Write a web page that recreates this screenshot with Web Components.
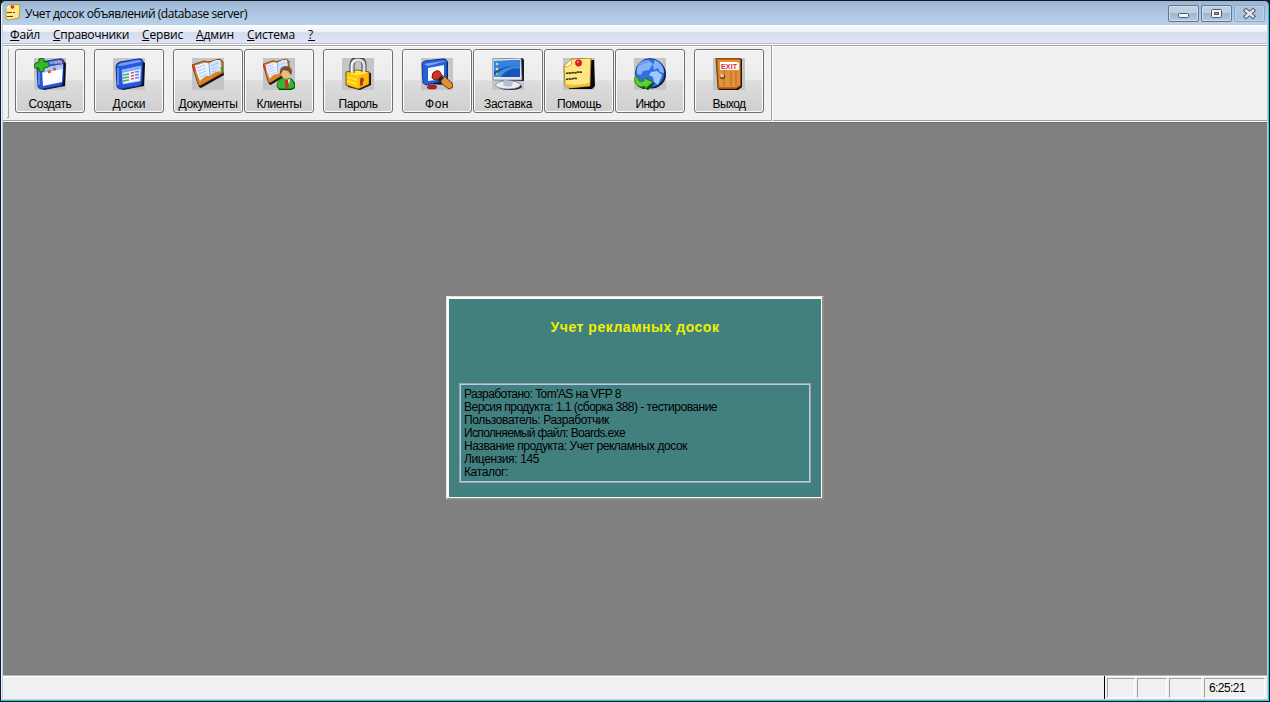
<!DOCTYPE html>
<html lang="ru"><head><meta charset="utf-8"><title>Учет досок объявлений</title>
<style>html,body{margin:0;width:1270px;height:702px;overflow:hidden;background:#101820}</style></head><body>
<boards-app></boards-app>
<script>
class Base extends HTMLElement{
  render(html){if(!this.shadowRoot)this.attachShadow({mode:'open'}).innerHTML=html}
}
// Text run whose tracking is adjusted so that it fills a given width
class FitText extends Base{
  connectedCallback(){
    this.render('<style>:host{display:inline-block;white-space:pre;line-height:inherit}span{display:inline-block}</style><span><slot></slot></span>');
    const s=this.shadowRoot.querySelector('span'),w=+this.getAttribute('w');
    const n=this.textContent.length;
    if(w&&n){s.style.letterSpacing=((w-s.getBoundingClientRect().width)/n)+'px'}
  }
}
customElements.define('fit-text',FitText);

const book='<path d="M2 9L14 5l3 2L31 3v10l1 4L9 30l-2-1z" fill="#111"/><path d="M0 7L12 3l4 1L28 1l3 3v11L8 28 6 26z" fill="#d8842a" stroke="#5a2c08" stroke-width=".8"/><path d="M2 8l9-3q4-1 6 1 4-4 11-4l2 11q-8 0-12 5-5-1-10 5z" fill="#e8f1ff"/><path d="M17 6l1 12q4-5 12-5L28 2q-7 0-11 4z" fill="#cfe4ff"/><path d="M17 6l1 12" stroke="#8ba8df"/><path d="M5 10l8-3M6 13l8-3M7 16l7-3M8 19l7-3M19 8l7-3M20 11l6-2M20 14l6-2" stroke="#a2b9ee" stroke-dasharray="2 .7"/><path d="M2 8l1 6" stroke="#f42e2e" stroke-width="2"/><path d="M29.500 9l.5 4" stroke="#22aa36" stroke-width="2"/>';
const frame='<path d="M5 6L27 2l5 3-1 23L10 32l-5-3z" fill="#080b19"/><path d="M3 9q0-4 4-5L25 1q4-1 5 2l-1 21q0 3-3 4L9 31q-5 0-5-3z" fill="#2457d9" stroke="#102982" stroke-width=".9"/><path d="M5 8Q5 6 9 5L25 2q3 0 3 2L8 8z" fill="#719ff7"/><path d="M5 10v17" stroke="#5b87ee" stroke-width="2"/>';
const ICONS={
create:frame+'<path d="M8 11l21-4-1 17-19 4z" fill="#fff"/><path d="M8 10l21-4v5L8 15z" fill="#a9c9ff"/><path d="M14 14l3-.6M19 11h3M26 6h2" stroke="#ed5a2d" stroke-width="3"/><path d="M21 5l7-1" stroke="#f59b8c" stroke-width="2" stroke-dasharray="2 1"/><path d="M5 1q4-2 5 0v3q4-1 5 1 1 3-1 4l-4 1v3q-2 2-5 0v-3q-4 1-5-1 0-4 2-4l3-1z" fill="#35b928" stroke="#125e12"/>',
boards:frame+'<path d="M9 12l19-4-1 15-17 3z" fill="#edf3ff" stroke="#a9bff0" stroke-width=".7"/><path d="M9 12l19-4v3L9 15z" fill="#82acff"/><path d="M10 17l6-1M10 20l6-1M10 23l6-1" stroke="#3fac68" stroke-width="1.5"/><path d="M18 15l3-.5M18 18l3-.5M18 21l3-.5" stroke="#ea524f" stroke-width="1.7"/><path d="M22 14l4-.6M22 17l4-.6M22 20l4-.6" stroke="#6580ec" stroke-width="1.5"/>',
docs:book,
clients:'<g transform="scale(.84 .9)">'+book+'</g><path d="M16 32q-3-9 5-12h6q6 3 5 10l-4 2z" fill="#08230a"/><path d="M14 29q0-8 6-9h6q5 2 6 9l-4 2H17z" fill="#30b72d" stroke="#0a5a10" stroke-width=".8"/><path d="M20 20l3 4 4-4-1 7-3-3z" fill="#fff"/><path d="M22 22h3l1 6-2 3-2-3z" fill="#d2292b"/><ellipse cx="23" cy="15" rx="5" ry="6" fill="#efb778"/><path d="M17 16q-1-7 5-8 7 0 7 6l-1 3-3-4-5-1-2 4z" fill="#745034"/>',
password:'<path d="M6 14l9-2 14 3v12L18 32 6 29z" fill="#17120b"/><path d="M4 14l11-2 12 2v12l-11 5L4 27z" fill="#ffc80d" stroke="#795000"/><path d="M5 14.500l10-2 11 2-10 3z" fill="#ffe849"/><path d="M16 18l10.500-3v11L16 30.500z" fill="#fdb80c"/><path d="M5 19l10 3M5 23l10 3" stroke="#ffe93c" stroke-width="1.500"/><path d="M10 15V8q0-7 6-7t6 6v7" stroke="#4b4b4b" stroke-width="5"/><path d="M10 15V8q0-6 6-6t6 5v7" stroke="#dedede" stroke-width="3"/><path d="M9.500 14V8q0-5 4-6" stroke="#fff"/><path d="M18 22q0-2.500 2-2.500t2 2.500l-1 2v3l-3 1z" fill="#ad391d"/>',
background:'<path d="M4 5L24 1l3 3v23L5 26z" fill="#0b1533"/><path d="M1 6q0-2 3-3L21 1q4-1 5 2v19L5 27l-3-2z" fill="#2760d7" stroke="#133896"/><path d="M3 6L22 3h3L7 8z" fill="#7da8ff"/><path d="M7 10l16-3v14L7 23z" fill="#f2f6ff"/><ellipse cx="11" cy="29" rx="5" ry="2.5" fill="#ad211e"/><path d="M11 19q0-5 4-6 4-1 5 3l3 3-3 4-8-2z" fill="#cf3227" stroke="#7e1a15"/><path d="M19 21l4-3 8 7 1 4-4 2-7-5z" fill="#e19234" stroke="#6c3908"/><path d="M16 22l4-4 3 2-4 4z" fill="#26242c"/>',
screen:'<path d="M2 1L30 0l2 2v21L2 22z" fill="#111a27"/><path d="M1 1L29 0l1 22L1 22z" fill="#e5e6ec" stroke="#777f92" stroke-width=".7"/><path d="M2 3l26-1v17H2z" fill="#1656b9"/><path d="M2 3l26-1v9Q17 5 2 14z" fill="#3183dd"/><path d="M2 18q12-12 26-8-14 0-19 9H2z" fill="#62adf1" opacity=".65"/><circle cx="5" cy="6" r="1.3" fill="#b7dced"/><circle cx="5" cy="11" r="1.3" fill="#ffe45e"/><circle cx="5" cy="16" r="1.3" fill="#68d775"/><ellipse cx="18" cy="28.5" rx="12" ry="3.5" fill="#222"/><ellipse cx="16" cy="27" rx="12.5" ry="4" fill="#ececf3" stroke="#787c8e" stroke-width=".7"/><path d="M12 22l9 1-1 5q-6 2-9-1z" fill="#b8bed1"/>',
help:'<path d="M4 8L9 2h22l1 26-3 3H6z" fill="#080808"/><path d="M1 8L8 1l20-1-1 28-20 2-5-2z" fill="#ffe681" stroke="#927420" stroke-width=".8"/><path d="M1 8L8 1l1 5-5 3z" fill="#fff7c5" stroke="#a27b24" stroke-width=".6"/><path d="M2 26q12 2 25-1v3L7 30l-5-2z" fill="#f0bd36"/><path d="M3 15.500l3-.7 1 .5 3-.8 2 .4 3-.9 4 .2M3 21.500l3-.7 2 .4 3-.9 3 .2" stroke="#3a3418" stroke-width="1.600" stroke-dasharray="2.500 .4"/><circle cx="15.5" cy="5" r="3.4" fill="#d71c24"/><circle cx="14.8" cy="4" r="1.1" fill="#ff9486"/>',
info:'<circle cx="17.500" cy="16" r="14.500" fill="#101632"/><circle cx="16" cy="15" r="14.5" fill="#336ee2" stroke="#163380" stroke-width=".8"/><path d="M3 10Q6 3 14 2l5 4-4 6-6 1-2 4-4-1zM21 2q9 4 9 13l-4-1-2-4-4 2-1-5z" fill="#86b1f8"/><path d="M17 14l6-1 5 4-4 10-4-3-1-5-4-2z" fill="#a0cbff"/><path d="M5 7q5-4 9-3" stroke="#6d9bf1" stroke-width="3"/><path d="M2 19q-3 9 7 12h4v2l8-8-9-5v4q-6 1-8-3z" fill="#154a14"/><path d="M1 19q-2 9 7 10l3-1v3l8-7-9-4v3q-6 2-6-4z" fill="#59cf30" stroke="#1d7818" stroke-width=".7"/>',
exit:'<path d="M5 1h24v28l-4 3H6z" fill="#0c0603"/><path d="M3 0h24l1 2v26l-5 3H5z" fill="#bd6514" stroke="#582b09" stroke-width=".8"/><path d="M5 2h22v25l-4 2H6z" fill="#df913b"/><path d="M11 13v15M18 13v15M23 13v15" stroke="#bd6c21"/><path d="M7 4h17l2 1v7H7z" fill="#fff"/><text x="8" y="10.500" font-family="Liberation Sans" font-size="7" font-weight="700" textLength="16" fill="#e61d31">EXIT</text><circle cx="9.5" cy="18.500" r="2.8" fill="#824412"/><circle cx="9" cy="17.500" r="2" fill="#efc38b"/>'
};
class AppIcon extends Base{connectedCallback(){this.render(`<style>:host{display:block;width:32px;height:32px;background:#c5c4c6}svg{display:block}</style><svg width="32" height="32" viewBox="0 0 32 32" fill="none">${ICONS[this.getAttribute('name')]}</svg>`)}}
customElements.define('app-icon',AppIcon);

class ToolButton extends Base{connectedCallback(){this.render(`<style>
:host{display:flex;flex-direction:column;align-items:center;box-sizing:border-box;width:70px;height:64px;border:1px solid #707070;border-radius:3px;box-shadow:inset 0 0 0 1px #fbfbfb;background:linear-gradient(#f2f2f2,#ebebeb 48%,#dddddd 50%,#cfcfcf);padding-top:8px;font:12px/15px "Liberation Sans",sans-serif;color:#000}
app-icon{margin-bottom:7px}</style><app-icon name="${this.getAttribute('icon')}"></app-icon><fit-text w="${this.getAttribute('w')}">${this.getAttribute('label')}</fit-text>`)}}
customElements.define('tool-button',ToolButton);

class ToolBar extends Base{connectedCallback(){
 const g=[[['create','Создать',43]],[['boards','Доски',33]],[['docs','Документы',59],['clients','Клиенты',45]],[['password','Пароль',39]],[['background','Фон',24],['screen','Заставка',48],['help','Помощь',44],['info','Инфо',29]],[['exit','Выход',33]]];
 this.render(`<style>:host{display:flex;box-sizing:border-box;height:78px;background:#f0f0f0;border:solid #fff;border-width:1px 0;box-shadow:inset 0 1px #a0a0a0,inset 0 2px #fff,inset 0 -1px #a0a0a0}
 .band{display:flex;gap:9px;width:769px;box-sizing:border-box;padding:3px 0 0 4px;border-right:1px solid #a0a0a0;margin-top:1px}.grip{height:69px;border:solid #a0a0a0;border-width:0 1px 1px 0;margin-right:-3px;box-sizing:border-box;width:2px}
 .g{display:flex;gap:1px}.end{width:1px;background:#fff}</style><div class="band"><div class="grip"></div>${g.map(a=>`<div class="g">${a.map(b=>`<tool-button icon="${b[0]}" label="${b[1]}" w="${b[2]}"></tool-button>`).join('')}</div>`).join('')}</div><div class="end"></div>`)}}
customElements.define('tool-bar',ToolBar);

class TitleBar extends Base{connectedCallback(){this.render(`<style>
:host{display:flex;height:24px;box-sizing:border-box;background:linear-gradient(#9ab4d2,#a9c3df 35%,#b9d1ea);padding:0 3px 0 2px;font:12px/24px "Open Sans","Noto Sans",sans-serif;color:#000}
.ic{margin:3px 4px 0 0}.sp{flex:1}.btns{display:flex;gap:2px;margin-top:4px}
fit-text{margin-top:1px}
b{box-sizing:border-box;width:31px;height:17px;border:1px solid #5f7692;border-radius:2px;box-shadow:inset 0 0 0 1px #cfdfef;background:linear-gradient(#bccfe3 45%,#9db6d1 50%,#b4cbe2);display:block}
b:last-child{border-color:#8ca8c7;box-shadow:inset 0 0 0 1px #bdd2e7;background:#adc6e0}svg{display:block}</style>
<svg class="ic" width="16" height="17" viewBox="0 0 16 17"><path d="M1 4l3-3 11-.5L14 14l-10 2-3-1z" fill="#ffe98a" stroke="#b38c1d" stroke-width=".8"/><path d="M1 4l3-3v3z" fill="#fff"/><path d="M2 8.5h5m1 0h2M2 12.5h6" stroke="#55471a"/><circle cx="7.5" cy="3" r="1.8" fill="#e02722"/></svg>
<fit-text w="222">Учет досок объявлений (database server)</fit-text><div class="sp"></div>
<div class="btns"><b><svg width="29" height="15"><rect x="9.5" y="7.5" width="10" height="4" rx="1" fill="#f5f5f5" stroke="#535666"/></svg></b><b><svg width="29" height="15"><rect x="9.5" y="3.5" width="10" height="8" rx="1" fill="#f5f5f5" stroke="#535666"/><rect x="12.5" y="6.5" width="4" height="2" fill="#91abc8" stroke="#535666"/></svg></b><b><svg width="29" height="15"><path d="M11 4.5l7 6M18 4.5l-7 6" stroke="#535666" stroke-width="4.4" stroke-linecap="square"/><path d="M11 4.5l7 6M18 4.5l-7 6" stroke="#e2e6ec" stroke-width="2.4" stroke-linecap="square"/></svg></b></div>`)}}
customElements.define('title-bar',TitleBar);

class MenuBar extends Base{connectedCallback(){
 const m=[['Файл',30],['Справочники',76],['Сервис',41],['Админ',38],['Система',48],['?',7]];
 this.render(`<style>:host{display:flex;gap:13px;height:19px;box-sizing:border-box;padding-left:7px;background:linear-gradient(#fdfdff 0,#eceff8 38%,#d6dcec 42%,#dfe5f4 100%);border-bottom:1px solid #b8bdcb;font:12px/20px "Open Sans","Noto Sans",sans-serif;color:#000}u{text-underline-offset:1px;text-decoration-thickness:1px}</style>${m.map(x=>`<fit-text w="${x[1]}"><u>${x[0][0]}</u>${x[0].slice(1)}</fit-text>`).join('')}`)}}
customElements.define('menu-bar',MenuBar);

class AboutSplash extends Base{connectedCallback(){
 const l=[["Разработано: Tom'AS на VFP 8",157],['Версия продукта: 1.1 (сборка 388) - тестирование',253],['Пользователь: Разработчик',145],['Исполняемый файл: Boards.exe',161],['Название продукта: Учет рекламных досок',223],['Лицензия: 145',75],['Каталог:',44]];
 this.render(`<style>:host{display:flex;flex-direction:column;align-items:center;box-sizing:border-box;width:378px;height:204px;background:#428080;border:solid;border-width:1px 2px 2px 1px;border-color:#e3e3e3 #8c8c8c #8c8c8c #e3e3e3;box-shadow:inset 2px 2px #fff,inset -1px -1px #fff;font:12px/13px "Liberation Sans",sans-serif;color:#000}
 h1{margin:21px 0 0 1px;font:bold 14px/18px "Liberation Sans",sans-serif;color:#f0f000;height:65px}
 .box{box-sizing:border-box;width:352px;height:100px;border:1px solid #a0a0a8;box-shadow:inset 0 0 0 1px #b4cdec;padding:4px;display:flex;flex-direction:column;align-items:flex-start;margin-left:1px}</style><h1><fit-text w="169">Учет рекламных досок</fit-text></h1><div class="box">${l.map(x=>`<fit-text w="${x[1]}">${x[0]}</fit-text>`).join('')}</div>`)}}
customElements.define('about-splash',AboutSplash);

class StatusBar extends Base{connectedCallback(){this.render(`<style>:host{display:flex;height:24px;box-sizing:border-box;background:#f0f0f0;border-top:1px solid #b4b4b4;box-shadow:inset 0 1px #fff;padding-right:2px;font:12px/19px "Liberation Sans",sans-serif;color:#000}
 .main{flex:1;border-right:1px solid #000}.p{box-sizing:border-box;height:20px;margin:2px 0 0 2px;border:1px solid;border-color:#a0a0a0 #fff #fff #a0a0a0}</style>
 <div class="main"></div><div class="p" style="width:28px"></div><div class="p" style="width:30px"></div><div class="p" style="width:33px"></div><div class="p" style="width:61px;padding-left:4px"><fit-text w="36">6:25:21</fit-text></div>`)}}
customElements.define('status-bar',StatusBar);

class BoardsApp extends Base{connectedCallback(){this.render(`<style>:host{display:flex;flex-direction:column;box-sizing:border-box;width:1270px;height:702px;border:1px solid #101820;border-radius:6px 6px 0 0;overflow:hidden;background:#b9d1ea;padding:0 2px 2px;box-shadow:inset -1px -1px #24cbe8,inset 1px 0 #e8f2fc}
 title-bar{flex:none;margin:0 -1px 0 0;height:24px}menu-bar,tool-bar,status-bar{flex:none}main{flex:1;background:#808080;display:flex;align-items:center;justify-content:center;border-top:1px solid #696969;box-sizing:border-box;padding-bottom:3px}</style>
 <title-bar></title-bar><menu-bar></menu-bar><tool-bar></tool-bar><main><about-splash></about-splash></main><status-bar></status-bar>`)}}
customElements.define('boards-app',BoardsApp);
</script></body></html>
